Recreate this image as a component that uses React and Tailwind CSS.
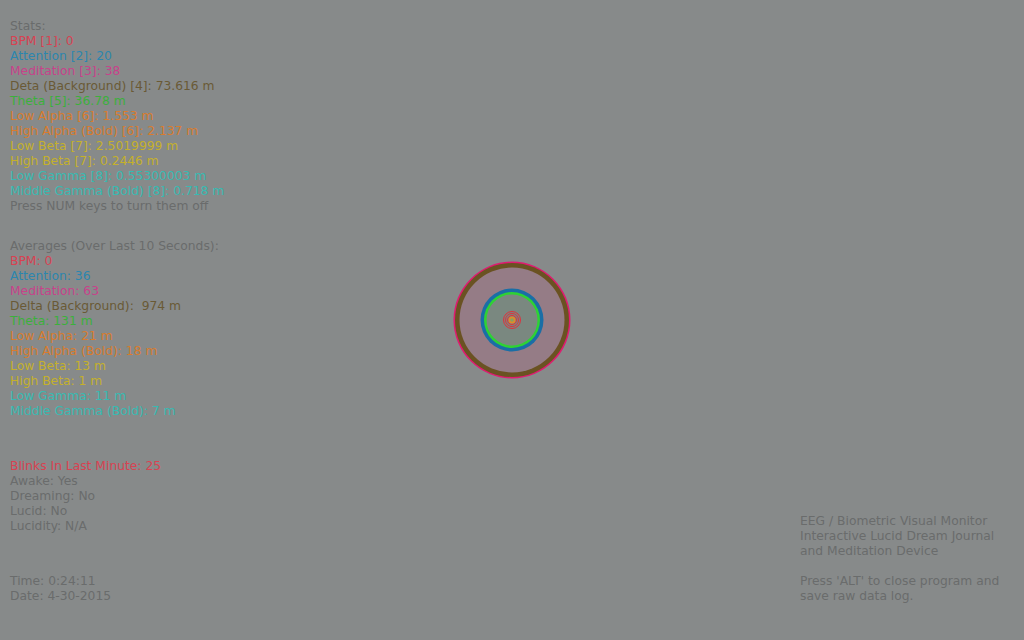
const grey = 'text-[#6a6c6c]';
const red = 'text-[#d84252]';
const blue = 'text-[#2c86ae]';
const pink = 'text-[#c8428a]';
const olive = 'text-[#6a5a36]';
const green = 'text-[#3cb03c]';
const orange = 'text-[#d87c2e]';
const yellow = 'text-[#c4b02c]';
const cyan = 'text-[#38bab2]';

const stats = [
  ['Stats:', grey],
  ['BPM [1]: 0', red],
  ['Attention [2]: 20', blue],
  ['Meditation [3]: 38', pink],
  ['Deta (Background) [4]: 73.616 m', olive],
  ['Theta [5]: 36.78 m', green],
  ['Low Alpha [6]: 1.553 m', orange],
  ['High Alpha (Bold) [6]: 2.137 m', orange],
  ['Low Beta [7]: 2.5019999 m', yellow],
  ['High Beta [7]: 0.2446 m', yellow],
  ['Low Gamma [8]: 0.55300003 m', cyan],
  ['Middle Gamma (Bold) [8]: 0.718 m', cyan],
  ['Press NUM keys to turn them off', grey],
];

const averages = [
  ['Averages (Over Last 10 Seconds):', grey],
  ['BPM: 0', red],
  ['Attention: 36', blue],
  ['Meditation: 63', pink],
  ['Delta (Background):  974 m', olive],
  ['Theta: 131 m', green],
  ['Low Alpha: 21 m', orange],
  ['High Alpha (Bold): 18 m', orange],
  ['Low Beta: 13 m', yellow],
  ['High Beta: 1 m', yellow],
  ['Low Gamma: 11 m', cyan],
  ['Middle Gamma (Bold): 7 m', cyan],
];

const state = [
  ['Blinks In Last Minute: 25', red],
  ['Awake: Yes', grey],
  ['Dreaming: No', grey],
  ['Lucid: No', grey],
  ['Lucidity: N/A', grey],
];

function Lines({ items, className = '' }) {
  return (
    <div className={className}>
      {items.map(([t, c], i) => (
        <div key={i} className={`${c} whitespace-pre`}>{t}</div>
      ))}
    </div>
  );
}

function Rings() {
  return (
    <svg width="122" height="122" viewBox="0 0 122 122">
      <circle cx="61" cy="61" r="58.5" fill="#e01a70" />
      <circle cx="61" cy="61" r="57" fill="#6a5222" />
      <circle cx="61" cy="61" r="52.5" fill="#957c86" />
      <circle cx="61" cy="61" r="31.5" fill="#1a6ea6" />
      <circle cx="61" cy="61" r="28" fill="#2ed234" />
      <circle cx="61" cy="61" r="25.5" fill="#7a8880" />
      <circle cx="61" cy="61" r="8.5" fill="none" stroke="#e0303c" strokeWidth="1" />
      <circle cx="61" cy="61" r="6.5" fill="none" stroke="#e0303c" strokeWidth="1" />
      <circle cx="61" cy="61" r="4.5" fill="none" stroke="#e0303c" strokeWidth="1" />
      <circle cx="61" cy="61" r="3.5" fill="#e08a2a" />
      <circle cx="61" cy="61" r="1.8" fill="#8aa060" />
    </svg>
  );
}

export default function App() {
  return (
    <div
      className="relative w-[1024px] h-[640px] bg-[#878a8a] text-[12.3px] leading-[15px] overflow-hidden flex"
      style={{ fontFamily: '"DejaVu Sans", Verdana, sans-serif' }}
    >
      <div className="pl-[10px] pt-[19px] w-[800px] shrink-0">
        <Lines items={stats} />
        <Lines items={averages} className="mt-[25px]" />
        <Lines items={state} className="mt-[40px]" />
        <div className="mt-[40px]">
          <div className={grey}>Time: 0:24:11</div>
          <div className={grey}>Date: 4-30-2015</div>
        </div>
      </div>
      <div className={`pt-[514px] whitespace-nowrap ${grey}`}>
        <div>EEG / Biometric Visual Monitor</div>
        <div>Interactive Lucid Dream Journal</div>
        <div>and Meditation Device</div>
        <div className="mt-[15px]">Press 'ALT' to close program and</div>
        <div>save raw data log.</div>
      </div>
      <div className="absolute left-[451px] top-[259px]">
        <Rings />
      </div>
    </div>
  );
}
